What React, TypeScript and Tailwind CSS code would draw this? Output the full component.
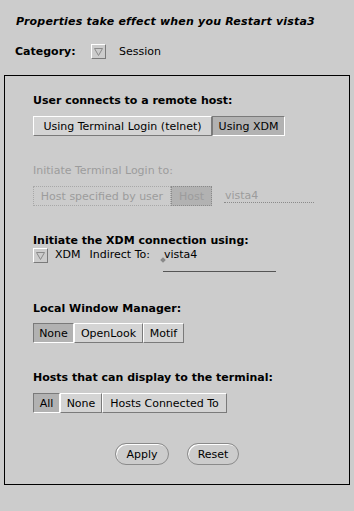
import React from 'react';

type Item = { label: string; w: number; on?: boolean };

const Segmented: React.FC<{ items: Item[] }> = ({ items }) => (
    <div className="flex h-[20px]">
        {items.map((it) => (
            <div
                key={it.label}
                style={{ width: it.w }}
                className={
                    it.on
                        ? 'flex items-center justify-center border border-t-[#7a7a7a] border-l-[#7a7a7a] border-b-white border-r-white bg-[#b2b2b2]'
                        : 'flex items-center justify-center border border-t-white border-l-white border-b-[#7a7a7a] border-r-[#7a7a7a] bg-[#d4d4d4]'
                }
            >
                {it.label}
            </div>
        ))}
    </div>
);

const MenuBox: React.FC = () => (
    <div className="flex h-[15px] w-[15px] items-center justify-center border border-t-white border-l-white border-b-[#7a7a7a] border-r-[#7a7a7a] bg-[#cccccc]">
        <svg width="9" height="8" viewBox="0 0 9 8">
            <path d="M0.5 0.5 H8.5 L4.5 7.5 Z" fill="none" stroke="#8a8a8a" strokeWidth="1" />
        </svg>
    </div>
);

const Heading: React.FC<{ children: React.ReactNode; className?: string }> = ({ children, className }) => (
    <div className={'font-bold ' + (className ?? '')}>{children}</div>
);

export default function App() {
    return (
        <div className="h-[511px] w-[354px] bg-[#cccccc] font-['DejaVu_Sans',sans-serif] text-[11px] leading-[13px] text-black">
            <div className="pl-[16px] pt-[15px] font-bold italic tracking-[0.2px]">Properties take effect when you Restart vista3</div>

            <div className="mt-[16px] flex h-[15px] items-center pl-[15px]">
                <div className="w-[76px] font-bold">Category:</div>
                <MenuBox />
                <div className="ml-[13px]">Session</div>
            </div>

            <div className="mx-[4px] mt-[16px] h-[410px] w-[346px] border border-black pl-[28px] pt-[18px]">
                <Heading>User connects to a remote host:</Heading>
                <div className="mt-[9px]">
                    <Segmented
                        items={[
                            { label: 'Using Terminal Login (telnet)', w: 179 },
                            { label: 'Using XDM', w: 73, on: true },
                        ]}
                    />
                </div>

                <div className="mt-[28px] text-[#9c9c9c]">Initiate Terminal Login to:</div>
                <div className="mt-[9px] flex h-[20px] items-center text-[#9c9c9c]">
                    <div className="flex h-[20px] w-[138px] items-center justify-center border border-dotted border-[#a8a8a8]">
                        Host specified by user
                    </div>
                    <div className="flex h-[20px] w-[41px] items-center justify-center border border-dotted border-[#8a8a8a] bg-[#b2b2b2]">
                        Host
                    </div>
                    <div className="ml-[12px] h-[17px] w-[90px] self-start border-b border-dotted border-[#8a8a8a] pl-[1px] pt-[3px]">
                        vista4
                    </div>
                </div>

                <Heading className="mt-[28px]">Initiate the XDM connection using:</Heading>
                <div className="mt-[1px] flex h-[24px] items-start">
                    <MenuBox />
                    <div className="ml-[7px]">XDM</div>
                    <div className="ml-[9px]">Indirect To:</div>
                    <div className="relative ml-[13px] h-[24px] w-[113px] border-b border-[#555555] pl-[1px]">
                        vista4
                        <span className="absolute left-[-2px] top-[10px] h-[4px] w-[4px] rotate-45 bg-[#8a8a8a]" />
                    </div>
                </div>

                <Heading className="mt-[30px]">Local Window Manager:</Heading>
                <div className="mt-[8px]">
                    <Segmented
                        items={[
                            { label: 'None', w: 41, on: true },
                            { label: 'OpenLook', w: 69 },
                            { label: 'Motif', w: 41 },
                        ]}
                    />
                </div>

                <Heading className="mt-[28px]">Hosts that can display to the terminal:</Heading>
                <div className="mt-[9px]">
                    <Segmented
                        items={[
                            { label: 'All', w: 27, on: true },
                            { label: 'None', w: 42 },
                            { label: 'Hosts Connected To', w: 125 },
                        ]}
                    />
                </div>

                <div className="mt-[30px] flex justify-center gap-[18px] pr-[28px]">
                    <button className="h-[22px] w-[54px] rounded-full border border-[#8a8a8a] bg-[#cccccc] shadow-[inset_1px_1px_0_#ffffff]">
                        Apply
                    </button>
                    <button className="h-[22px] w-[52px] rounded-full border border-[#8a8a8a] bg-[#cccccc] shadow-[inset_1px_1px_0_#ffffff]">
                        Reset
                    </button>
                </div>
            </div>
        </div>
    );
}
